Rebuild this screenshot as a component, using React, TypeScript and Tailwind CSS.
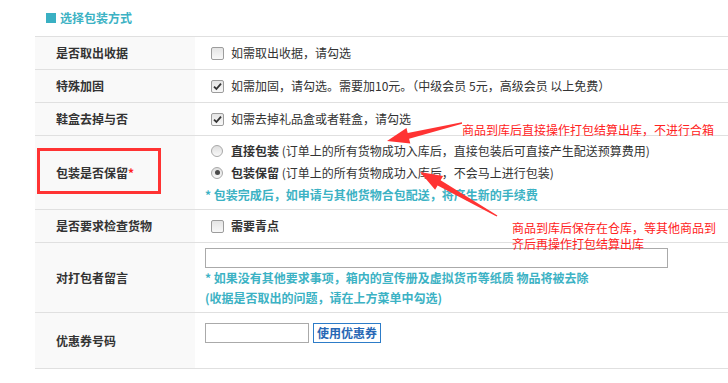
import type { ReactNode } from "react";

const font = "font-['Noto_Sans_CJK_SC','Noto_Sans_CJK_SC',sans-serif]";

function Checkbox({ checked }: { checked?: boolean }) {
  return (
    <span className="ml-[6px] mr-[7px] flex size-[13px] shrink-0 items-center justify-center rounded-[2px] border border-[#9c9c9c] bg-gradient-to-b from-[#e4e4e4] to-[#f8f8f8]">
      {checked && (
        <svg width="9" height="9" viewBox="0 0 9 9">
          <path d="M1 4.6 L3.4 7 L8 1.6" fill="none" stroke="#333" strokeWidth="1.8" />
        </svg>
      )}
    </span>
  );
}

function Radio({ checked }: { checked?: boolean }) {
  return (
    <span className="ml-[6px] mr-[8px] flex size-[12px] shrink-0 items-center justify-center rounded-full border border-[#a8a8a8] bg-gradient-to-b from-[#dedede] to-[#f9f9f9]">
      {checked && <span className="size-[5px] rounded-full bg-[#4a4a4a]" />}
    </span>
  );
}

type RowProps = {
  label: ReactNode;
  height: string;
  children: ReactNode;
  valueClass?: string;
};

function Row({ label, height, children, valueClass }: RowProps) {
  return (
    <div className={`flex border-b border-[#e0e0e0] ${height}`}>
      <div className="relative flex w-[160px] shrink-0 items-center bg-[#f9f9f9] pl-[21px] text-[12px] font-bold text-[#333]">
        {label}
      </div>
      <div className={`flex flex-1 pl-[10px] text-[12px] text-[#333] ${valueClass ?? "items-center"}`}>
        {children}
      </div>
    </div>
  );
}

export default function App() {
  return (
    <div className={`relative h-[383px] w-[728px] overflow-hidden bg-white ${font}`}>
      <div className="flex h-[36px] items-center pl-[46px] pb-[1px] text-[12px] font-bold text-[#3cb2c4]">
        <span className="mr-[4px] size-[10px] bg-[#3ab0c3]" />
        选择包装方式
      </div>

      <div className="ml-[35px] border-t border-[#e0e0e0]">
        <Row label="是否取出收据" height="h-[33px]">
          <Checkbox />
          如需取出收据，请勾选
        </Row>
        <Row label="特殊加固" height="h-[33px]">
          <Checkbox checked />
          如需加固，请勾选。需要加10元。（中级会员 5元，高级会员 以上免费）
        </Row>
        <Row label="鞋盒去掉与否" height="h-[33px]">
          <Checkbox checked />
          如需去掉礼品盒或者鞋盒，请勾选
        </Row>
        <Row
          label={
            <>
              包装是否保留<span className="text-[#ff2222]">*</span>
              <span className="absolute left-[2px] top-[12px] h-[46px] w-[124px] border-[3px] border-[#ff3333]" />
            </>
          }
          height="h-[74px]"
          valueClass="flex-col justify-center"
        >
          <div className="flex h-[22px] items-center">
            <Radio />
            <b>直接包装</b>&nbsp;(订单上的所有货物成功入库后，直接包装后可直接产生配送预算费用)
          </div>
          <div className="flex h-[22px] items-center">
            <Radio checked />
            <b>包装保留</b>&nbsp;(订单上的所有货物成功入库后，不会马上进行包装)
          </div>
          <div className="flex h-[22px] items-center font-bold text-[#3cb2c4]">
            * 包装完成后，如申请与其他货物合包配送，将产生新的手续费
          </div>
        </Row>
        <Row label="是否要求检查货物" height="h-[33px]">
          <Checkbox />
          <b>需要青点</b>
        </Row>
        <Row label="对打包者留言" height="h-[70px]" valueClass="flex-col pt-[5px]">
          <input className="h-[20px] w-[463px] border border-[#aaa] bg-white" />
          <div className="leading-[20px] font-bold text-[#3cb2c4]">
            * 如果没有其他要求事项，箱内的宣传册及虚拟货币等纸质 物品将被去除
          </div>
          <div className="leading-[19px] font-bold text-[#3cb2c4]">(收据是否取出的问题，请在上方菜单中勾选)</div>
        </Row>
        <Row label="优惠券号码" height="h-[56px]" valueClass="items-start pt-[10px]">
          <input className="h-[20px] w-[104px] border border-[#aaa] bg-white" />
          <button className="ml-[4px] flex h-[20px] w-[68px] items-center justify-center border border-[#2d7cc8] bg-white text-[12px] font-bold text-[#2767b5]">
            使用优惠券
          </button>
        </Row>
      </div>

      <svg className="pointer-events-none absolute left-0 top-0" width="728" height="383">
        <polygon
          fill="#ff3333"
          points="461.9,122.3 407.7,132.9 406.5,128.1 387,141 410.3,143.6 409.1,138.8 462.1,123.7"
        />
        <polygon
          fill="#ff3333"
          points="497.4,215.4 440.6,180.3 443.1,176 420,172 435.1,189.8 437.6,185.5 496.6,216.6"
        />
      </svg>

      <div className="absolute left-[462px] top-[123px] text-[12px] leading-[14px] text-[#ff2222]">
        商品到库后直接操作打包结算出库，不进行合箱
      </div>
      <div className="absolute left-[512px] top-[220px] text-[12px] leading-[16px] text-[#ff2222]">
        商品到库后保存在仓库，等其他商品到
        <br />
        齐后再操作打包结算出库
      </div>
    </div>
  );
}
